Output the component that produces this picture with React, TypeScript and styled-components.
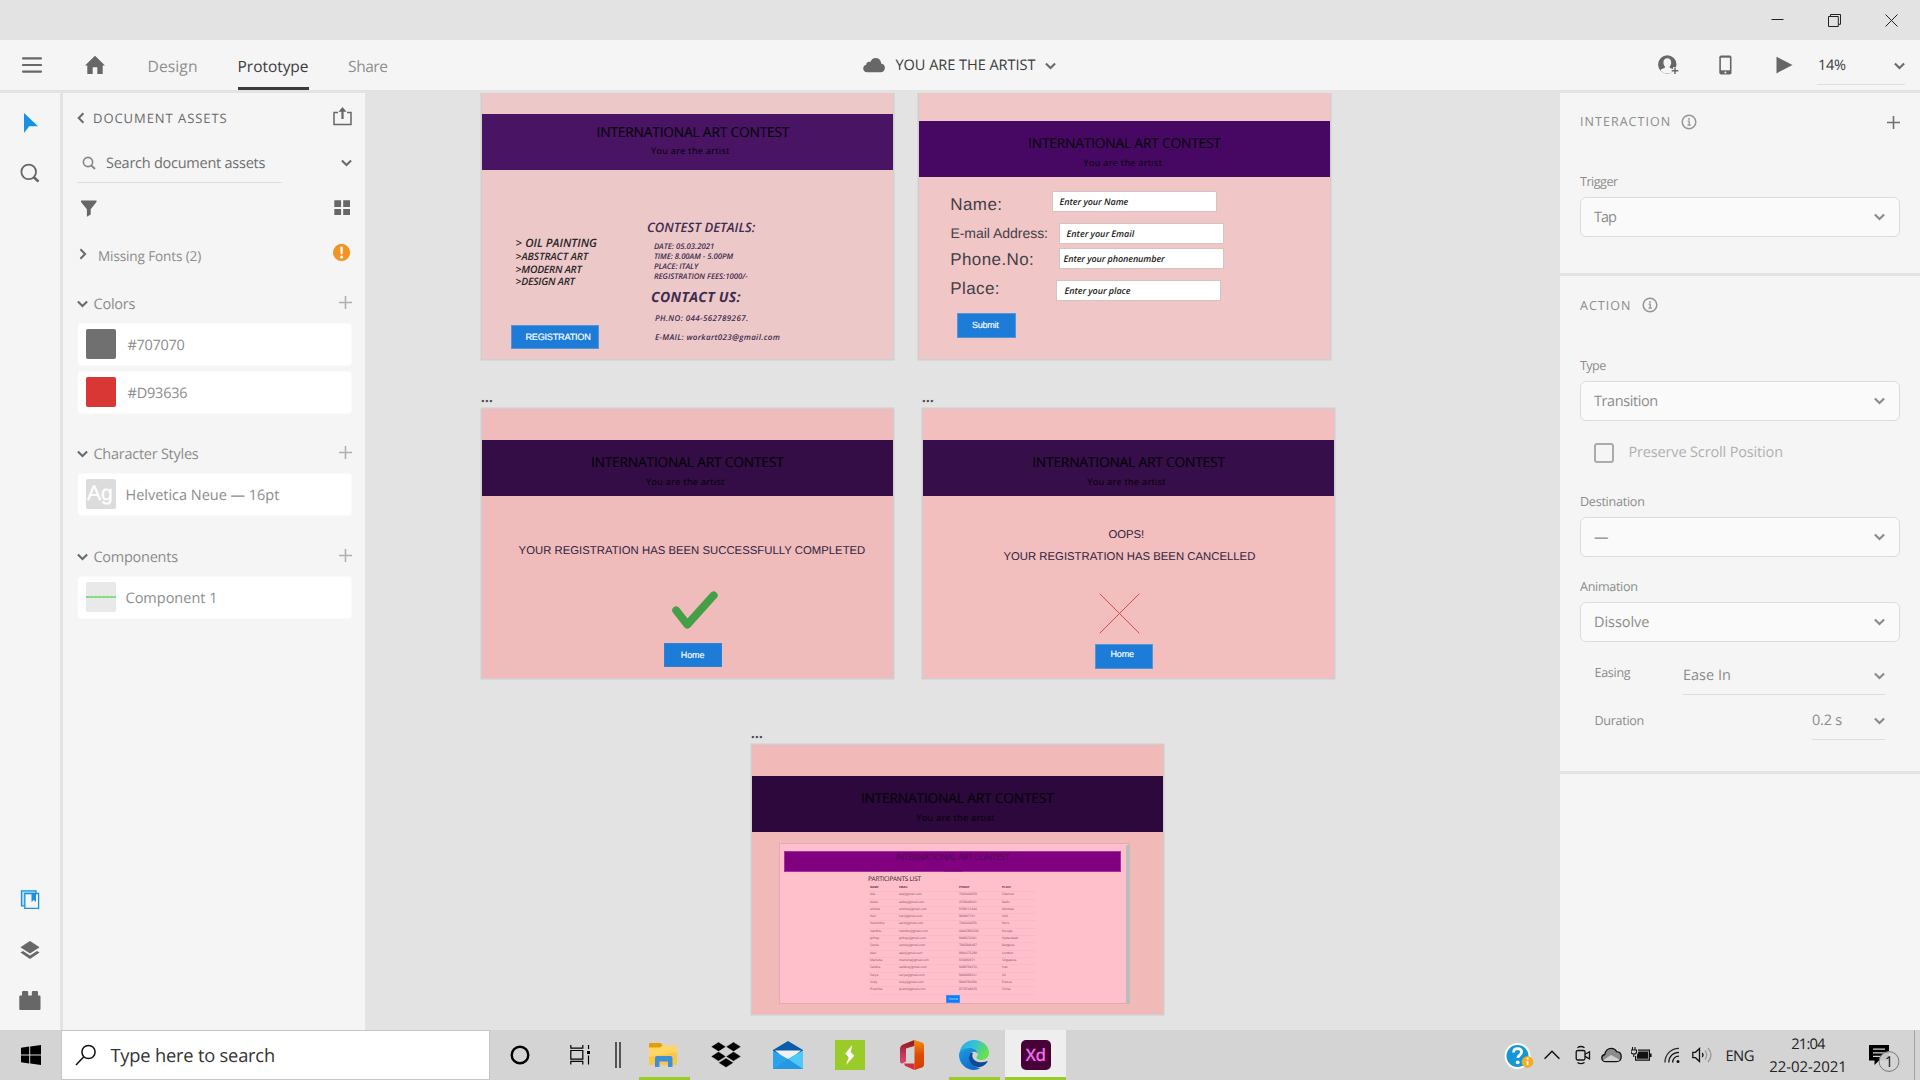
import React from 'react';
import styled, { createGlobalStyle, css } from 'styled-components';

const Global = createGlobalStyle`
  * { box-sizing: border-box; }
  body { margin: 0; background: #e3e3e3; font-family: "Open Sans", "Noto Sans", sans-serif; text-rendering: geometricPrecision; overflow: hidden; }
  svg { display: block; flex: none; }
`;

/* ---------- shared ---------- */

const Txt = styled.span<{ $s: number; $ls?: number; $c?: string; $ml?: number; $dy?: number }>`
  flex: none;
  white-space: pre;
  line-height: 20px;
  font-size: ${p => p.$s}px;
  letter-spacing: ${p => p.$ls ?? 0}px;
  color: ${p => p.$c ?? '#8c8c8c'};
  margin-left: ${p => p.$ml ?? 0}px;
  padding-top: ${p => Math.max(0, (p.$dy ?? 1) * 2)}px;
  padding-bottom: ${p => Math.max(0, (p.$dy ?? 1) * -2)}px;
`;

const Gap = styled.div<{ $w: number }>`
  flex: none;
  width: ${p => p.$w}px;
`;

const Spacer = styled.div`
  flex: 1;
`;

const Lower = styled.div<{ $by: number }>`
  flex: none;
  padding-top: ${p => p.$by * 2}px;
`;

const Raise = styled.div`
  flex: none;
  padding: 0 0 4px;
`;

const Screen = styled.div`
  width: 1920px;
  height: 1080px;
  display: flex;
  flex-direction: column;
  background: #e3e3e3;
`;

const Chevron = ({ color = '#6a6a6a', dir = 'down' }: { color?: string; dir?: 'down' | 'left' | 'right' }) =>
  dir === 'down' ? (
    <svg width="11" height="8" viewBox="0 0 11 8" fill="none" stroke={color} strokeWidth="2.1">
      <path d="M.9 1.6 5.5 6.100 10.1 1.600" />
    </svg>
  ) : (
    <svg width="8" height="12" viewBox="0 0 8 12" fill="none" stroke={color} strokeWidth="2">
      <path d={dir === 'left' ? 'M6.4 1.3 1.7 6l4.7 4.7' : 'M1.4 1.3 6.1 6l-4.7 4.7'} />
    </svg>
  );

const Plus = ({ color }: { color: string }) => (
  <svg width="13" height="13" viewBox="0 0 13 13" stroke={color} strokeWidth="1.6">
    <path d="M6.5 0v13M0 6.5h13" />
  </svg>
);

/* ---------- title bar and header ---------- */

const TitleBar = styled.div`
  height: 40px;
  flex: none;
  display: flex;
  align-items: center;
  justify-content: flex-end;
  padding-right: 22px;
  gap: 44px;
`;

const Header = styled.header`
  height: 50px;
  flex: none;
  display: flex;
  align-items: center;
  background: #f5f5f5;
`;

const HeaderSide = styled.div<{ $w?: number }>`
  display: flex;
  align-items: center;
  height: 50px;
  ${p => (p.$w ? css`width: ${p.$w}px; flex: none;` : css`flex: 1;`)}
`;

const ActiveTab = styled.div`
  height: 50px;
  width: 71px;
  margin-left: 40px;
  display: flex;
  align-items: center;
  border-bottom: 3px solid #3b3b3b;
  padding-top: 3px;
`;

const Zoom = styled.div`
  width: 88px;
  height: 32px;
  margin: 7px 15px 0 24px;
  display: flex;
  align-items: center;
  justify-content: space-between;
  border-bottom: 1px solid #dedede;
  padding-bottom: 4px;
`;

/* ---------- body ---------- */

const Body = styled.div`
  flex: 1;
  min-height: 0;
  margin-top: 3px;
  display: flex;
`;

const Rail = styled.nav`
  width: 60px;
  flex: none;
  display: flex;
  flex-direction: column;
  align-items: flex-start;
  padding: 19px 0 19px 19px;
  background: #f5f5f5;
`;

const RailIcon = styled.div<{ $mt?: number }>`
  width: 22px;
  height: 22px;
  margin-top: ${p => p.$mt ?? 0}px;
`;

const Assets = styled.aside`
  width: 302px;
  flex: none;
  margin-left: 3px;
  padding: 0 13px 0 14px;
  display: flex;
  flex-direction: column;
  background: #f5f5f5;
`;

const Row = styled.div<{ $h: number; $mt?: number; $mb?: number; $pl?: number }>`
  display: flex;
  align-items: center;
  flex: none;
  height: ${p => p.$h}px;
  margin-top: ${p => p.$mt ?? 0}px;
  margin-bottom: ${p => p.$mb ?? 0}px;
  padding-left: ${p => p.$pl ?? 0}px;
`;

const SearchField = styled.div`
  width: 205px;
  height: 40px;
  display: flex;
  align-items: center;
  padding-left: 5px;
  border-bottom: 1px solid #dedede;
`;

const Card = styled.div`
  height: 43px;
  margin: 0 0 5px 1px;
  flex: none;
  display: flex;
  align-items: center;
  padding: 0 0 1px 8px;
  background: #fff;
  border: 1px solid #fafafa;
  border-left: 0;
  border-radius: 4px;
`;

const Swatch = styled.div<{ $bg: string }>`
  width: 30px;
  height: 30px;
  flex: none;
  border-radius: 2px;
  background: ${p => p.$bg};
  display: flex;
  align-items: center;
  padding-left: 1px;
  font: 21px/30px "Liberation Sans", Arial, sans-serif;
  color: #fff;
  -webkit-text-stroke: 0.3px #fff;
`;

const GreenLine = styled.div`
  width: 30px;
  height: 2px;
  margin-left: -1px;
  background: repeating-linear-gradient(90deg, #7ddc7d 0 3px, #a5e0a5 3px 4px);
`;

/* ---------- canvas ---------- */

const Canvas = styled.main`
  position: relative;
  width: 1195px;
  flex: none;
  overflow: hidden;
`;

const Board = styled.section<{ $x: number; $y: number; $w: number; $h: number; $bg: string }>`
  position: absolute;
  left: ${p => p.$x}px;
  top: ${p => p.$y}px;
  width: ${p => p.$w}px;
  height: ${p => p.$h}px;
  background: ${p => p.$bg};
  box-shadow: 0 0 0 1.5px #d0cece;
`;

const Band = styled.div<{ $y: number; $bg: string }>`
  position: absolute;
  left: 0;
  right: 0;
  top: ${p => p.$y}px;
  height: 55.5px;
  background: ${p => p.$bg};
`;

/* Canvas text anchored by its left edge and baseline. */
const Label = styled.span<{ $x: number; $b: number; $s: number; $ls?: number; $c: string; $v?: 'semi' | 'bold' | 'arial' | 'arialMed' }>`
  position: absolute;
  white-space: pre;
  line-height: 20px;
  left: ${p => p.$x + 0.4}px;
  top: ${p => p.$b - 9.1 - p.$s * (p.$v?.startsWith('arial') ? 0.3465 : 0.388)}px;
  font-size: ${p => p.$s}px;
  letter-spacing: ${p => p.$ls ?? 0}px;
  color: ${p => p.$c};
  ${p => p.$v === 'semi' && css`font-weight: 600; font-style: italic;`}
  ${p => p.$v === 'bold' && css`font-weight: 700; font-style: italic;`}
  ${p => p.$v?.startsWith('arial') && css`font-family: "Liberation Sans", Arial, sans-serif;`}
  ${p => p.$v === 'arialMed' && css`-webkit-text-stroke: 0.15px currentColor;`}
`;

const Box = styled.div<{ $x: number; $y: number; $w: number; $h: number; $bg: string; $bd?: string }>`
  position: absolute;
  left: ${p => p.$x}px;
  top: ${p => p.$y}px;
  width: ${p => p.$w}px;
  height: ${p => p.$h}px;
  background: ${p => p.$bg};
  border: 1px solid ${p => p.$bd ?? p.$bg};
`;

const Drawing = styled.svg<{ $x: number; $y: number }>`
  position: absolute;
  left: ${p => p.$x}px;
  top: ${p => p.$y}px;
`;

const BoardHead = ({ x, b, x2, b2 }: { x: number; b: number; x2: number; b2: number }) => (
  <>
    <Label $x={x - 0.5} $b={b} $s={13.8} $ls={-0.21} $c="#000">INTERNATIONAL ART CONTEST</Label>
    <Label $x={x2 - 0.3} $b={b2 - 0.5} $s={9} $ls={0.36} $c="#000">You are the artist</Label>
  </>
);

const Dots = () => (
  <Label $x={-0.8} $b={-6.3} $s={14} $c="#4a4a4a" $v="bold">...</Label>
);

const BLUE = '#1c7cd8';
const INK = '#3f2c4f';

const Participants = styled.div`
  position: absolute;
  left: 116px;
  top: 139.2px;
  width: 168px;
  font-size: 3.1px;
  color: #7a4a58;
`;

const PRow = styled.div<{ $head?: boolean }>`
  display: grid;
  grid-template-columns: 29px 60px 43px 36px;
  height: 7.32px;
  line-height: 7px;
  padding-left: 2px;
  white-space: nowrap;
  box-shadow: 0 1px 0 #fab9c6;
  ${p => p.$head && css`font-weight: 700; color: #5a2c3c; font-size: 2.9px;`}
`;

const PEOPLE = [
  ['Alia', 'alia@gmail.com', '7345434878', 'Chennai'],
  ['Aisha', 'aisha@gmail.com', '2378049021', 'Delhi'],
  ['amitha', 'amitha@gmail.com', '9788112344', 'Mumbai'],
  ['Hari', 'hari@gmail.com', '984907701', 'USA'],
  ['Harshitha', 'aarti@gmail.com', '7345434876', 'Paris'],
  ['nandhu', 'nandhu@gmail.com', '08447895233', 'Europe'],
  ['Jeffrey', 'jeffrey@gmail.com', '9488274501', 'Hyderabad'],
  ['Samia', 'samia@gmail.com', '7845848487', 'Bangkok'],
  ['Alex', 'alex@gmail.com', '8940275298', 'London'],
  ['Manisha', 'manisha@gmail.com', '978490971', 'Singapore'],
  ['Sandra', 'sandra@gmail.com', '9488794570', 'Iran'],
  ['Surya', 'surya@gmail.com', '9484398521', 'US'],
  ['Vicky', 'vicky@gmail.com', '9849784590', 'France'],
  ['Pranitha', 'pranit@gmail.com', '8778748878', 'China'],
];

const Boards = () => (
  <Canvas>
    <Board $x={117} $y={0} $w={411} $h={266} $bg="#ecc8c8">
      <Band $y={21.3} $bg="#481463" />
      <BoardHead x={114.7} b={44} x2={169} b2={61} />
      <Label $x={164.5} $b={138.3} $s={13} $ls={0.05} $c={INK} $v="semi">CONTEST DETAILS:</Label>
      <Label $x={171.5} $b={156} $s={7.8} $ls={-0.02} $c={INK} $v="semi">DATE: 05.03.2021</Label>
      <Label $x={171.5} $b={166} $s={7.8} $ls={-0.05} $c={INK} $v="semi">TIME: 8.00AM - 5.00PM</Label>
      <Label $x={171.5} $b={176} $s={7.8} $ls={-0.08} $c={INK} $v="semi">PLACE: ITALY</Label>
      <Label $x={171.5} $b={186} $s={7.8} $ls={-0.02} $c={INK} $v="semi">REGISTRATION FEES:1000/-</Label>
      <Label $x={168.7} $b={210} $s={14} $ls={0.32} $c={INK} $v="bold">CONTACT US:</Label>
      <Label $x={172.5} $b={228} $s={8} $ls={0.37} $c={INK} $v="semi">PH.NO: 044-562789267.</Label>
      <Label $x={172.5} $b={247} $s={8} $ls={0.33} $c={INK} $v="semi">E-MAIL: workart023@gmail.com</Label>
      <Label $x={33.2} $b={155} $s={11.5} $ls={0.03} $c="#2b2528" $v="semi">&gt; OIL PAINTING</Label>
      <Label $x={33.2} $b={167.3} $s={10.3} $ls={-0.02} $c="#2b2528" $v="semi">&gt;ABSTRACT ART</Label>
      <Label $x={33.2} $b={180.3} $s={10.3} $ls={-0.22} $c="#2b2528" $v="semi">&gt;MODERN ART</Label>
      <Label $x={33.2} $b={192.3} $s={10.3} $ls={-0.21} $c="#2b2528" $v="semi">&gt;DESIGN ART</Label>
      <Box $x={28.5} $y={231.5} $w={88} $h={24} $bg={BLUE} $bd="#5596d6" />
      <Label $x={43} $b={246.3} $s={9.2} $ls={-0.25} $c="#fff" $v="arialMed">REGISTRATION</Label>
    </Board>

    <Board $x={553.5} $y={0} $w={411.5} $h={266} $bg="#f0c6c6">
      <Band $y={28.2} $bg="#470864" />
      <BoardHead x={109.7} b={55} x2={165} b2={73} />
      <Label $x={31.4} $b={117} $s={17} $ls={0.41} $c="#424046" $v="arial">Name:</Label>
      <Label $x={31.5} $b={144} $s={14} $ls={-0.03} $c="#424046" $v="arial">E-mail Address:</Label>
      <Label $x={31.4} $b={172} $s={17} $ls={0.39} $c="#424046" $v="arial">Phone.No:</Label>
      <Label $x={31.4} $b={201} $s={17} $ls={0.4} $c="#424046" $v="arial">Place:</Label>
      <Box $x={133.5} $y={98} $w={165} $h={21} $bg="#fff" $bd="#d3c4c4" />
      <Box $x={140.5} $y={130} $w={165} $h={21} $bg="#fff" $bd="#d3c4c4" />
      <Box $x={140.5} $y={155} $w={165} $h={21} $bg="#fff" $bd="#d3c4c4" />
      <Box $x={137.5} $y={187} $w={165} $h={21} $bg="#fff" $bd="#d3c4c4" />
      <Label $x={140.7} $b={111.500} $s={9} $ls={-0.06} $c="#222" $v="semi">Enter your Name</Label>
      <Label $x={147.7} $b={143.500} $s={9} $ls={-0.03} $c="#222" $v="semi">Enter your Email</Label>
      <Label $x={144.7} $b={168.500} $s={9} $ls={-0.1} $c="#222" $v="semi">Enter your phonenumber</Label>
      <Label $x={145.7} $b={200.500} $s={9} $ls={-0.08} $c="#222" $v="semi">Enter your place</Label>
      <Box $x={38.5} $y={220} $w={59} $h={25} $bg={BLUE} $bd="#5596d6" />
      <Label $x={53} $b={234.3} $s={9} $ls={-0.24} $c="#fff" $v="arialMed">Submit</Label>
    </Board>

    <Board $x={117} $y={316} $w={411} $h={269} $bg="#efbbbb">
      <Dots />
      <Band $y={31.3} $bg="#340d47" />
      <BoardHead x={109} b={58} x2={164} b2={75.7} />
      <Label $x={36.2} $b={145} $s={11.3} $ls={0.03} $c="#2f2440" $v="arial">YOUR REGISTRATION HAS BEEN SUCCESSFULLY COMPLETED</Label>
      <Drawing $x={188} $y={180} width="50" height="42" viewBox="0 0 50 42" fill="none" stroke="#459f47" strokeWidth="8" strokeLinecap="round" strokeLinejoin="round">
        <path d="M6.2 21.4 17.3 35.6 43.6 6.4" />
      </Drawing>
      <Box $x={181.5} $y={234} $w={58.5} $h={24} $bg={BLUE} $bd="#2f83d6" />
      <Label $x={198.4} $b={248} $s={9} $ls={-0.1} $c="#fff" $v="arialMed">Home</Label>
    </Board>

    <Board $x={558} $y={316} $w={411} $h={269} $bg="#f2bebe">
      <Dots />
      <Band $y={31.3} $bg="#360e49" />
      <BoardHead x={109.3} b={58} x2={164.2} b2={75.7} />
      <Label $x={185} $b={128.7} $s={11.3} $ls={-0.02} $c="#2f2440" $v="arial">OOPS!</Label>
      <Label $x={80} $b={151} $s={11.3} $ls={0.03} $c="#2f2440" $v="arial">YOUR REGISTRATION HAS BEEN CANCELLED</Label>
      <Drawing $x={176} $y={184} width="42" height="42" viewBox="0 0 42 42" stroke="#dc4a4a" strokeWidth="1">
        <path d="M.7.7 40.3 40.3M40.3.7.7 40.3" />
      </Drawing>
      <Box $x={172} $y={235} $w={58} $h={25} $bg={BLUE} $bd="#5596d6" />
      <Label $x={187} $b={247} $s={9} $ls={-0.1} $c="#fff" $v="arialMed">Home</Label>
    </Board>

    <Board $x={387} $y={651.7} $w={411} $h={269.3} $bg="#f1b9b7">
      <Dots />
      <Band $y={31.6} $bg="#2c083d" />
      <BoardHead x={109} b={58.7} x2={164.2} b2={76.7} />
      <Box $x={27} $y={98.3} $w={351} $h={161.3} $bg="#ffbfcb" $bd="#dfabb2" />
      <Box $x={374} $y={100} $w={3.500} $h={159} $bg="#bdbcbc" />
      <Box $x={32} $y={106.3} $w={337} $h={21.500} $bg="#800080" $bd="#a8309a" />
      <Label $x={143} $b={115} $s={8.7} $ls={-0.44} $c="#4d0d55">INTERNATIONAL ART CONTEST</Label>
      <Label $x={190.600} $b={126} $s={2.400} $c="#4d0d55">You are the artist</Label>
      <Label $x={115.600} $b={136} $s={6.400} $ls={-0.22} $c="#2a1a20">PARTICIPANTS LIST</Label>
      <Participants>
        <PRow $head><span>NAME</span><span>EMAIL</span><span>PHONE</span><span>PLACE</span></PRow>
        {PEOPLE.map(r => (
          <PRow key={r[2] + r[0]}>{r.map(c => <span key={c}>{c}</span>)}</PRow>
        ))}
      </Participants>
      <Box $x={193.700} $y={250.300} $w={14} $h={7.600} $bg="#0a7cff" $bd="#3a90f5" />
      <Label $x={196} $b={254.600} $s={3.400} $c="#d8e8ff">Home</Label>
    </Board>
  </Canvas>
);

/* ---------- property inspector ---------- */

const Inspector = styled.aside`
  width: 360px;
  flex: none;
  display: flex;
  flex-direction: column;
  gap: 3px;
`;

const Panel = styled.div<{ $h?: number }>`
  background: #f5f5f5;
  padding: 0 20px;
  ${p => (p.$h ? css`height: ${p.$h}px; flex: none;` : css`flex: 1;`)}
`;

const SelectBox = styled.div`
  height: 40px;
  display: flex;
  align-items: center;
  justify-content: space-between;
  padding: 0 14px 0 13px;
  background: #fafafa;
  border: 1px solid #dcdcdc;
  border-radius: 6px;
`;

const CheckBox = styled.div`
  width: 20px;
  height: 20px;
  margin-left: 14px;
  border: 2px solid #ababab;
  border-radius: 3px;
`;

const Underlined = styled.div<{ $w: number; $h: number }>`
  width: ${p => p.$w}px;
  height: ${p => p.$h}px;
  margin-left: auto;
  margin-right: 15px;
  display: flex;
  align-items: center;
  justify-content: space-between;
  border-bottom: 1px solid #dedede;
`;

const Info = () => (
  <svg width="16" height="16" viewBox="0 0 16 16" fill="none" stroke="#959595">
    <circle cx="8" cy="8" r="6.8" strokeWidth="1.5" />
    <path d="M6.600 7.200h1.600v4M6.400 11.200h3.400" strokeWidth="1.300" />
    <circle cx="8" cy="4.900" r=".95" fill="#959595" stroke="none" />
  </svg>
);

const Select = ({ label, ls, value, vls }: { label: string; ls: number; value: string; vls: number }) => (
  <>
    <Row $h={32}><Txt $s={12.6} $ls={ls}>{label}</Txt></Row>
    <SelectBox>
      <Txt $s={14.5} $ls={vls} $dy={0.6}>{value}</Txt>
      <Chevron color="#8a8a8a" />
    </SelectBox>
  </>
);

/* ---------- task bar ---------- */

const TaskBar = styled.footer`
  height: 50px;
  flex: none;
  display: flex;
  align-items: center;
  background: #d4d4d4;
`;

const StartSearch = styled.div`
  width: 429px;
  height: 50px;
  display: flex;
  align-items: center;
  padding-left: 13px;
  background: #fff;
  border: 1px solid #c6c6c6;
`;

const AppSlot = styled.div<{ $w: number; $ml?: number; $pr?: number; $open?: boolean; $on?: boolean }>`
  width: ${p => p.$w}px;
  height: 50px;
  flex: none;
  margin-left: ${p => p.$ml ?? 0}px;
  padding-right: ${p => p.$pr ?? 0}px;
  display: flex;
  align-items: center;
  justify-content: center;
  background: ${p => (p.$on ? '#eeeeee' : 'transparent')};
  box-shadow: ${p => (p.$open ? 'inset 0 -3px 0 #9acb28' : 'none')};
`;

const XdTile = styled.div`
  width: 30px;
  height: 30px;
  border-radius: 5px;
  background: #470137;
  color: #f56bf0;
  font: 600 17px/29px "Open Sans", sans-serif;
  letter-spacing: -0.6px;
  text-align: center;
`;

const Clock = styled.div`
  width: 90px;
  display: flex;
  flex-direction: column;
  align-items: center;
  gap: 3px;
`;

const ShowDesktop = styled.div`
  width: 6px;
  height: 50px;
  border-left: 1px solid #a3a3a3;
`;

const G = '#676767';

export default function App() {
  return (
    <Screen>
      <Global />
      <TitleBar>
        <svg width="13" height="13" viewBox="0 0 13 13" stroke="#222"><path d="M.5 5.500h12" /></svg>
        <svg width="13" height="13" viewBox="0 0 13 13" fill="none" stroke="#222"><path d="M.5 2.500h9.800v10H.5zM2.500 2.500V.5h10v9.800h-2" /></svg>
        <svg width="13" height="13" viewBox="0 0 13 13" stroke="#222"><path d="M.5.5l12 12M12.500.5l-12 12" /></svg>
      </TitleBar>

      <Header>
        <HeaderSide $w={863}>
          <Gap $w={22} />
          <svg width="20" height="18" viewBox="0 0 20 18" stroke={G} strokeWidth="2.100" strokeLinecap="round"><path d="M1 2.400h18M1 9h18M1 15.600h18" /></svg>
          <Gap $w={43} />
          <svg width="20" height="20" viewBox="0 0 20 20" fill={G}><path d="M10 .8 20 10.600H17.700V19H12.300V12.200H7.700V19H2.300V10.600H0z" /></svg>
          <Txt $s={15.700} $ls={0.05} $ml={42.500} $c="#8f8f8f">Design</Txt>
          <ActiveTab><Txt $s={15.500} $ls={-0.05} $c="#3c3c3c">Prototype</Txt></ActiveTab>
          <Txt $s={15.500} $ls={-0.45} $ml={39.500} $c="#8f8f8f">Share</Txt>
        </HeaderSide>
        <HeaderSide>
          <svg width="22" height="16" viewBox="0 0 22 16" fill={G}><path d="M17.800 15.300H4.200C1.900 15.300.2 13.700.2 11.500c0-1.800 1.200-3.300 3-3.700 0-2.200 2.200-3.700 4.100-2.800C8.300 2.300 10.400.7 13 .9c3 .2 5.200 2.700 5.100 5.600 2.200.2 3.800 2 3.800 4.300 0 2.600-1.800 4.500-4.100 4.500z" /></svg>
          <Txt $s={14.600} $ls={-0.07} $ml={10.500} $dy={0} $c="#3c3c3c">YOU ARE THE ARTIST</Txt>
          <Gap $w={10} />
          <Lower $by={0.500}><Chevron /></Lower>
          <Spacer />
          <svg width="21" height="20" viewBox="0 0 21 20">
            <circle cx="9.300" cy="9.500" r="9.200" fill={G} />
            <path d="M9.300 3.300c2.500 0 3.900 1.700 3.900 4.200 0 1.800-.7 3.100-1.500 4v1.300c1.700.6 3.300 1.200 4.400 2.400-1.700 2.100-4 3.200-6.800 3.200s-5.100-1.100-6.800-3.200c1.100-1.200 2.700-1.800 4.400-2.400v-1.300c-.8-.9-1.500-2.200-1.500-4 0-2.500 1.400-4.200 3.900-4.200z" fill="#f5f5f5" />
            <path d="M16.800 12v8M13 15.800h8" stroke="#f5f5f5" strokeWidth="3.400" />
            <path d="M17 12.500v6.600M13.700 15.800h6.600" stroke={G} strokeWidth="1.500" />
          </svg>
          <Gap $w={40} />
          <svg width="13" height="20" viewBox="0 0 13 20"><rect x=".3" y=".5" width="12.200" height="19" rx="1.800" fill={G} /><path d="M1.900 2.700h9v12.600h-9z" fill="#f5f5f5" /><circle cx="6.400" cy="17.400" r="1" fill="#f5f5f5" /></svg>
          <Gap $w={44} />
          <svg width="17" height="18" viewBox="0 0 17 18" fill={G}><path d="M.5.8 16.500 9 .5 17.400z" /></svg>
          <Zoom><Txt $s={14.500} $ls={-0.3} $ml={1} $dy={-0.5} $c="#3c3c3c">14%</Txt><Chevron /></Zoom>
        </HeaderSide>
      </Header>

      <Body>
        <Rail>
          <RailIcon><svg width="22" height="22" viewBox="0 0 22 22" fill="#1592e6"><path d="M5 1v20l5.200-6.800H19z" /></svg></RailIcon>
          <RailIcon $mt={29}><svg width="22" height="22" viewBox="0 0 22 22" fill="none" stroke={G}><circle cx="9.700" cy="8.900" r="7.300" strokeWidth="1.800" /><path d="M14.900 14.200 19.500 18.600" strokeWidth="2.600" /></svg></RailIcon>
          <Spacer />
          <RailIcon><svg width="22" height="22" viewBox="0 0 22 22" fill="none" stroke="#1592e6" strokeWidth="1.300"><path d="M5.800 16.800H2.500V1.800H17V4" fill="#b7dbf6" /><path d="M5.800 4.500h13.800v14.800H5.800z" fill="#f5f5f5" /><path d="M12.500 5h4.500v8l-2.250-2-2.250 2z" fill="#1592e6" stroke="none" /></svg></RailIcon>
          <RailIcon $mt={28}><svg width="22" height="22" viewBox="0 0 22 22" fill={G}><path d="M11 2 20.600 8.300 11 14.600 1.400 8.300z" /><path d="M4 11.900 11 16.500l7-4.600 2.600 1.700L11 20.100 1.400 13.600z" /></svg></RailIcon>
          <RailIcon $mt={28}><svg width="22" height="22" viewBox="0 0 22 22" fill={G}><path d="M1.200 6.500H3V3.200Q3 2 4.200 2H8q1.200 0 1.200 1.200V6.500h3.600V3.200Q12.800 2 14 2h3.800Q19 2 19 3.200v3.300h1.600q.9 0 .9.900V20q0 .9-.9.900H1.200Q.3 20.900.3 20V7.400q0-.9.9-.9z" /></svg></RailIcon>
        </Rail>

        <Assets>
          <Row $h={50}>
            <Chevron dir="left" />
            <Txt $s={13} $ls={0.95} $ml={8} $dy={0.300} $c="#6a6a6a">DOCUMENT ASSETS</Txt>
            <Spacer />
            <Raise><svg width="19" height="19" viewBox="0 0 19 19" fill="none" stroke={G}><path d="M5 5.500H1v12h17v-12h-4" strokeWidth="1.500" /><path d="M9.500 12V3.500" strokeWidth="2.200" /><path d="M9.500 0 13.500 4.700h-8z" fill={G} stroke="none" /></svg></Raise>
          </Row>
          <Row $h={40}>
            <SearchField>
              <Lower $by={0.500}><svg width="14" height="14" viewBox="0 0 14 14" fill="none" stroke="#858585"><circle cx="6" cy="6" r="4.600" strokeWidth="1.600" /><path d="M9.200 9.400 13 13" strokeWidth="1.900" /></svg></Lower>
              <Txt $s={14.500} $ls={-0.25} $ml={10} $c="#6f6f6f">Search document assets</Txt>
            </SearchField>
            <Spacer />
            <Chevron />
          </Row>
          <Row $h={51}>
            <Gap $w={4} />
            <svg width="16" height="17" viewBox="0 0 16 17" fill={G}><path d="M0 .5h15.500v1.600L9.700 9.300v5.200l-3.800 2.300V9.300L0 2.100z" /></svg>
            <Spacer />
            <Raise><svg width="16" height="16" viewBox="0 0 16 16" fill={G}><path d="M.3 1.300h6.800V8H.3zM9.200 1.300H16V8H9.200zM.3 10h6.800v6H.3zM9.200 10H16v6H9.200z" /></svg></Raise>
            <Gap $w={2} />
          </Row>
          <Row $h={40} $pl={2}>
            <Chevron dir="right" />
            <Txt $s={13.600} $ls={-0.14} $ml={11} $dy={2}>Missing Fonts (2)</Txt>
            <Spacer />
            <svg width="18" height="20" viewBox="0 0 18 20"><circle cx="8.600" cy="8.500" r="8.600" fill="#f29423" /><path d="M7.300 2.800h2.600l-.4 7.500H7.700z" fill="#fff" /><circle cx="8.600" cy="13.100" r="1.500" fill="#fff" /></svg>
            <Gap $w={1} />
          </Row>
          <Row $h={20} $mt={20} $mb={9}>
            <Chevron /><Txt $s={14.500} $ls={-0.22} $ml={5.500}>Colors</Txt><Spacer /><Raise><Plus color="#b0b0b0" /></Raise>
          </Row>
          <Card><Swatch $bg="#707070" /><Txt $s={14.500} $ls={-0.3} $ml={11.500} $dy={1.500}>#707070</Txt></Card>
          <Card><Swatch $bg="#d93636" /><Txt $s={14.500} $ls={-0.2} $ml={11.500} $dy={1.500}>#D93636</Txt></Card>
          <Row $h={20} $mt={25} $mb={9}>
            <Chevron /><Txt $s={14.500} $ls={-0.26} $ml={5.500}>Character Styles</Txt><Spacer /><Raise><Plus color="#b0b0b0" /></Raise>
          </Row>
          <Card><Swatch $bg="#dcdcdc">Ag</Swatch><Txt $s={14.500} $ls={-0.02} $ml={9.500} $dy={1.500}>Helvetica Neue — 16pt</Txt></Card>
          <Row $h={20} $mt={26} $mb={9}>
            <Chevron /><Txt $s={14.500} $ls={-0.26} $ml={5.500}>Components</Txt><Spacer /><Raise><Plus color="#b0b0b0" /></Raise>
          </Row>
          <Card><Swatch $bg="#e9e9e9"><GreenLine /></Swatch><Txt $s={14.500} $ls={0} $ml={9.500} $dy={1.500}>Component 1</Txt></Card>
        </Assets>

        <Boards />

        <Inspector>
          <Panel $h={180}>
            <Row $h={58}>
              <Txt $s={12.500} $ls={1.04} $dy={0.300}>INTERACTION</Txt>
              <Gap $w={10} />
              <Info />
              <Spacer />
              <Lower $by={0.500}><Plus color="#707070" /></Lower>
            </Row>
            <Row $h={14} />
            <Select label="Trigger" ls={-0.5} value="Tap" vls={-1} />
          </Panel>
          <Panel $h={495}>
            <Row $h={58}>
              <Txt $s={12.500} $ls={1.02}>ACTION</Txt>
              <Gap $w={10.500} />
              <Info />
            </Row>
            <Row $h={15} />
            <Select label="Type" ls={-0.6} value="Transition" vls={-0.42} />
            <Row $h={64}>
              <CheckBox />
              <Txt $s={14.500} $ls={-0.15} $ml={14.500} $dy={0} $c="#b0b0b0">Preserve Scroll Position</Txt>
            </Row>
            <Select label="Destination" ls={-0.27} value="—" vls={0} />
            <Row $h={13} />
            <Select label="Animation" ls={-0.32} value="Dissolve" vls={-0.06} />
            <Row $h={53} $pl={14.500}>
              <Txt $s={12.600} $ls={-0.32} $dy={4.300}>Easing</Txt>
              <Underlined $w={202} $h={53}><Txt $s={14.500} $ls={0} $dy={7.500}>Ease In</Txt><Lower $by={8}><Chevron color="#8a8a8a" /></Lower></Underlined>
            </Row>
            <Row $h={45} $pl={14.500}>
              <Txt $s={12.600} $ls={-0.32} $dy={3.300}>Duration</Txt>
              <Underlined $w={73} $h={45}><Txt $s={14.500} $ls={-0.2} $dy={3.500}>0.2 s</Txt><Lower $by={4}><Chevron color="#8a8a8a" /></Lower></Underlined>
            </Row>
          </Panel>
          <Panel />
        </Inspector>
      </Body>

      <TaskBar>
        <AppSlot $w={61}>
          <svg width="20" height="20" viewBox="0 0 20 20"><path d="M0 2.800 8.200 1.600V9.500H0zM9.200 1.500 20 0v9.500H9.200zM0 10.500h8.200v7.900L0 17.200zM9.200 10.500H20V20L9.200 18.500z" /></svg>
        </AppSlot>
        <StartSearch>
          <svg width="22" height="22" viewBox="0 0 22 22" fill="none" stroke="#111" strokeWidth="1.500"><circle cx="13.500" cy="8" r="6.600" /><path d="M8.800 12.700 1 21" /></svg>
          <Txt $s={18.300} $ls={-0.2} $ml={13.500} $c="#333">Type here to search</Txt>
        </StartSearch>
        <AppSlot $w={60}><svg width="20" height="20" viewBox="0 0 20 20" fill="none" stroke="#000" strokeWidth="2.400"><circle cx="10" cy="10" r="8.300" /></svg></AppSlot>
        <AppSlot $w={60}><svg width="20" height="20" viewBox="0 0 20 20" fill="none" stroke="#000" strokeWidth="1.200"><path d="M.8 0v3.200h12V0M.8 5.500h12v8.600h-12zM.8 19.500v-3.200h12v3.200M18.500 0v4M18.500 10.500v9" /><path d="M17 6h3v3h-3z" fill="#000" stroke="none" /></svg></AppSlot>
        <AppSlot $w={18} $pr={2}><svg width="6" height="26" viewBox="0 0 6 26" stroke="#000" strokeWidth="1.200"><path d="M1 0v26M5 0v26" /></svg></AppSlot>
        <AppSlot $w={51} $ml={11} $pr={3} $open>
          <svg width="28" height="24" viewBox="0 0 28 24"><path d="M0 1.200Q0 0 1.200 0H11.500L13.500 2.500 12 5H0z" fill="#e39d0a" /><path d="M0 4.500h11l2.500-2H27q1 0 1 1V22H0z" fill="#ffd563" /><path d="M0 14v8h28V9z" fill="#fbc844" /><path d="M6 24v-9q0-2 2-2H21.500q2 0 2 2v9H19v-5.500H10.500V24z" fill="#3f8fd6" /></svg>
        </AppSlot>
        <AppSlot $w={30} $ml={21}>
          <svg width="30" height="26" viewBox="0 0 30 26"><path d="M7.500 0 15 4.800 7.500 9.600 0 4.800zM22.500 0 30 4.800 22.500 9.600 15 4.800zM7.500 9.600 15 14.400 7.500 19.200 0 14.400zM22.500 9.600 30 14.400 22.500 19.200 15 14.400zM15 16l7.500 4.800L15 25.600 7.500 20.800z" stroke="#d4d4d4" strokeWidth=".5" /></svg>
        </AppSlot>
        <AppSlot $w={30} $ml={32}>
          <svg width="30" height="28" viewBox="0 0 30 28"><path d="M0 9 15 0l15 9v4H0z" fill="#0b5cab" /><path d="M2 9.500h26L15 20z" fill="#f1f1f1" /><path d="M0 9.500 15 18l15-8.500V28H0z" fill="#2ba3ea" /><path d="M15 18l15-8.500V28z" fill="#50c8f5" /><path d="M0 28 30 28 15 18z" fill="#1f8fe0" opacity=".55" /></svg>
        </AppSlot>
        <AppSlot $w={30} $ml={32}>
          <svg width="30" height="30" viewBox="0 0 30 30"><path d="M0 0h30v30H0z" fill="#9acb28" /><path d="M17.300 5 10.300 13.500l3.400 3.800L11 25l8.300-9.300-3.600-3.600z" fill="#fff" /></svg>
        </AppSlot>
        <AppSlot $w={24} $ml={34.500}>
          <svg width="24" height="30" viewBox="0 0 24 30">
            <defs><linearGradient id="of" x1="0" y1="0" x2="0" y2="1"><stop offset="0" stopColor="#8f1414" /><stop offset=".6" stopColor="#c0395a" /><stop offset="1" stopColor="#d9486a" /></linearGradient><linearGradient id="of2" x1="0" y1="0" x2="0" y2="1"><stop offset="0" stopColor="#f29005" /><stop offset=".5" stopColor="#de4a05" /><stop offset="1" stopColor="#d83b01" /></linearGradient></defs>
            <path d="M14.500 0 3 4.500Q0 6 0 9v12q0 3 2.500 2.500L6 21.500V8.500L14.500 6z" fill="url(#of)" />
            <path d="M14.500 0 22 2.500Q24 3.200 24 5.500v19q0 2.300-2 3l-7.500 2.500z" fill="url(#of2)" />
            <path d="M4 23.500h10.500V30L5 25.800z" fill="#d42b3f" />
          </svg>
        </AppSlot>
        <AppSlot $w={51} $ml={25} $open>
          <svg width="30" height="30" viewBox="0 0 30 30">
            <defs><linearGradient id="e1" x1="0" y1="0" x2="1" y2=".4"><stop offset="0" stopColor="#2aa7e2" /><stop offset=".5" stopColor="#35c1d8" /><stop offset="1" stopColor="#66e04f" /></linearGradient><linearGradient id="e2" x1="0" y1="0" x2=".6" y2="1"><stop offset="0" stopColor="#1b9de2" /><stop offset="1" stopColor="#0f6bc9" /></linearGradient></defs>
            <path d="M.5 13C1.500 5.500 7.600 0 15 0c8.500 0 15 5.800 15 12.800 0 4.600-3.600 7.200-7.500 7.200-3.500 0-5-1.200-5-2.300 0-.9 1.300-1.500 1.300-3.700 0-3-3-5.600-7-5.600C6.500 8.400 2.500 10 .5 13z" fill="url(#e1)" />
            <path d="M0 15c0-4 5-7 10.500-7 4.800 0 8 2.600 8 6-.5-1.500-2.500-2.500-4.500-2-3 .8-4.500 3.500-3.500 7.500 1 4.500 5 8 11 8.500-2 1.300-4.300 2-6.500 2C6.700 30 0 23.300 0 15z" fill="url(#e2)" />
            <path d="M11 13.500c-3 6 1 13.500 8.500 13.700 3.500 0 7-2.200 9-5.200.3-.6-.2-1-.8-.7-6 2.600-13.500.2-14.300-4.800-.2-1.500.1-2.700.6-3.500-1 0-2.200 0-3 .5z" fill="#0f4a96" />
          </svg>
        </AppSlot>
        <AppSlot $w={61} $ml={5.500} $open $on><XdTile>Xd</XdTile></AppSlot>
        <Spacer />
        <svg width="30" height="30" viewBox="0 0 30 30">
          <circle cx="13.500" cy="16" r="13" fill="#fff" /><circle cx="13.500" cy="16" r="11" fill="#1597d6" />
          <path d="M9.600 12.500q0-3.800 4-3.800t4 3.400c0 3-3.800 3-3.800 6" fill="none" stroke="#fff" strokeWidth="2.800" /><circle cx="13.700" cy="22.300" r="1.900" fill="#fff" />
          <circle cx="23.500" cy="22" r="5.800" fill="#f6ac1c" /><path d="M23.500 20.800v4.500" stroke="#fff" strokeWidth="1.800" /><circle cx="23.500" cy="18.600" r="1.100" fill="#fff" />
        </svg>
        <Gap $w={10} />
        <svg width="16" height="10" viewBox="0 0 16 10" fill="none" stroke="#111" strokeWidth="1.500"><path d="M.6 8.700 8 1.300l7.400 7.400" /></svg>
        <Gap $w={15} />
        <svg width="16" height="20" viewBox="0 0 16 20" fill="none" stroke="#111" strokeWidth="1.300"><rect x="1.200" y="5.500" width="8.800" height="9.500" rx="1.500" /><path d="M10 9.200 14.500 6.800v7L10 11.400M2.500 2.700Q5.800.3 9.500 2.700M2.500 17.500q3.300 2.400 7 0" /></svg>
        <Gap $w={10.500} />
        <svg width="21" height="16" viewBox="0 0 21 16"><path d="M4.800 14.500C2.300 14.500.8 13 .8 11c0-1.800 1.200-3.200 3-3.500C4.300 3.800 7 1.300 10.300 1.300c2.500 0 4.300 1.300 5.300 3.400 2.800.2 4.600 2.200 4.600 4.800 0 3-2 5-5 5z" fill="#8d8d8d" stroke="#111" strokeWidth="1.300" /><path d="M2 13.300 10 8l8.800 4.700c-1 1-2 1.300-3.500 1.300H4.800C3.500 14 2.700 13.800 2 13.300z" fill="#cfcfcf" /></svg>
        <Gap $w={9} />
        <svg width="21" height="16" viewBox="0 0 21 16" fill="none" stroke="#111" strokeWidth="1.200"><path d="M7 3.100h11.400v10H4.600V9" /><path d="M7.500 4.500h9.700v7.200H6V8z" fill="#111" stroke="none" /><path d="M19.800 6.500v3.500" strokeWidth="1.600" /><path d="M1.500 0v2.500M4 0v2.500M0 3h5.500v2q0 2-2.700 2T0 5zM2.800 7v3" strokeWidth="1.100" /></svg>
        <Gap $w={12} />
        <svg width="17" height="17" viewBox="0 0 17 17" fill="none" stroke="#111" strokeWidth="1.300"><path d="M1 15.500C1 7.500 7 1.300 15 1.300" opacity=".85" /><path d="M4.800 15.500C4.800 9.500 9 5.300 15 5.300M8.700 15.500c0-3.900 2.400-6.300 6.300-6.300" /><circle cx="14" cy="14.600" r="1.500" fill="#111" stroke="none" /></svg>
        <Gap $w={10.500} />
        <svg width="21" height="18" viewBox="0 0 21 18" fill="none" stroke="#111" strokeWidth="1.300"><path d="M.8 6.300h2.700L7.500 2.500v13L3.500 11.700H.8z" /><path d="M10.300 7q1.500 2 0 4" /><path d="M13 4.500q3.500 4.500 0 9M16 2q6 7 0 14" stroke="#999" /></svg>
        <Txt $s={14.800} $ls={-0.5} $ml={12.500} $dy={0.500} $c="#222">ENG</Txt>
        <Gap $w={9} />
        <Clock>
          <Txt $s={14.700} $ls={-0.8} $dy={0} $c="#222">21:04</Txt>
          <Txt $s={15} $ls={-0.1} $dy={0} $c="#222">22-02-2021</Txt>
        </Clock>
        <Gap $w={16} />
        <svg width="31" height="34" viewBox="0 0 31 34">
          <path d="M0 7h20v15.500H10L5.500 27v-4.500H0z" fill="#000" /><path d="M4 11.200h12M4 14.800h12M4 18.400h8" stroke="#d4d4d4" strokeWidth="1.200" />
          <circle cx="20" cy="23.500" r="9.900" fill="#d4d4d4" fillOpacity=".93" stroke="#777" strokeWidth="1" />
          <text x="20" y="28.800" textAnchor="middle" fontFamily="Open Sans, sans-serif" fontSize="15" fill="#111">1</text>
        </svg>
        <Gap $w={14} />
        <ShowDesktop />
      </TaskBar>
    </Screen>
  );
}
